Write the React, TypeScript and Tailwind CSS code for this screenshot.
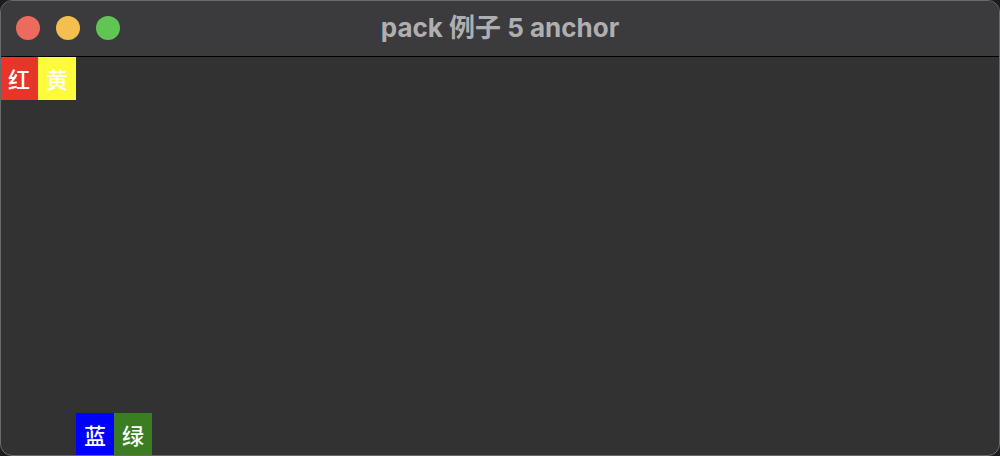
import React from 'react';

const cjk = { fontFamily: '"Noto Sans CJK SC", "Noto Sans", sans-serif' };
const title = { fontFamily: 'Inter, "Noto Sans CJK SC", sans-serif' };

const Light = ({ color }: { color: string }) => (
  <span className={`block w-6 h-6 rounded-full ${color}`} />
);

export default function App() {
  return (
    <div className="w-[1000px] h-[456px] bg-[#1c1c1e] overflow-hidden">
      <div className="w-full h-full flex flex-col rounded-[12px] border border-[#6a6a6c] overflow-hidden bg-[#323232]">
        {/* Title bar */}
        <div className="relative h-[56px] shrink-0 flex items-center bg-[#3b3b3d] border-b border-black">
          <div className="flex items-center gap-4 pl-[15px] -mt-[2px]">
            <Light color="bg-[#ec6a5e]" />
            <Light color="bg-[#f4bf4f]" />
            <Light color="bg-[#61c554]" />
          </div>
          <div
            className="absolute inset-0 flex items-center justify-center pb-[3px] text-[26px] font-bold text-[#afafb1] pointer-events-none"
            style={title}
          >
            pack 例子 5 anchor
          </div>
        </div>

        {/* Content */}
        <div className="flex-1 flex flex-col justify-between text-white text-[22px] font-medium" style={cjk}>
          <div className="flex -ml-px">
            <div className="w-[38px] h-[43px] flex items-center justify-center bg-[#e8352a]">红</div>
            <div className="w-[38px] h-[43px] flex items-center justify-center bg-[#fdfb3c]">黄</div>
          </div>
          <div className="flex ml-[75px] -mb-px">
            <div className="w-[38px] h-[43px] flex items-center justify-center bg-[#0000ff]">蓝</div>
            <div className="w-[38px] h-[43px] flex items-center justify-center bg-[#3a7d22]">绿</div>
          </div>
        </div>
      </div>
    </div>
  );
}
